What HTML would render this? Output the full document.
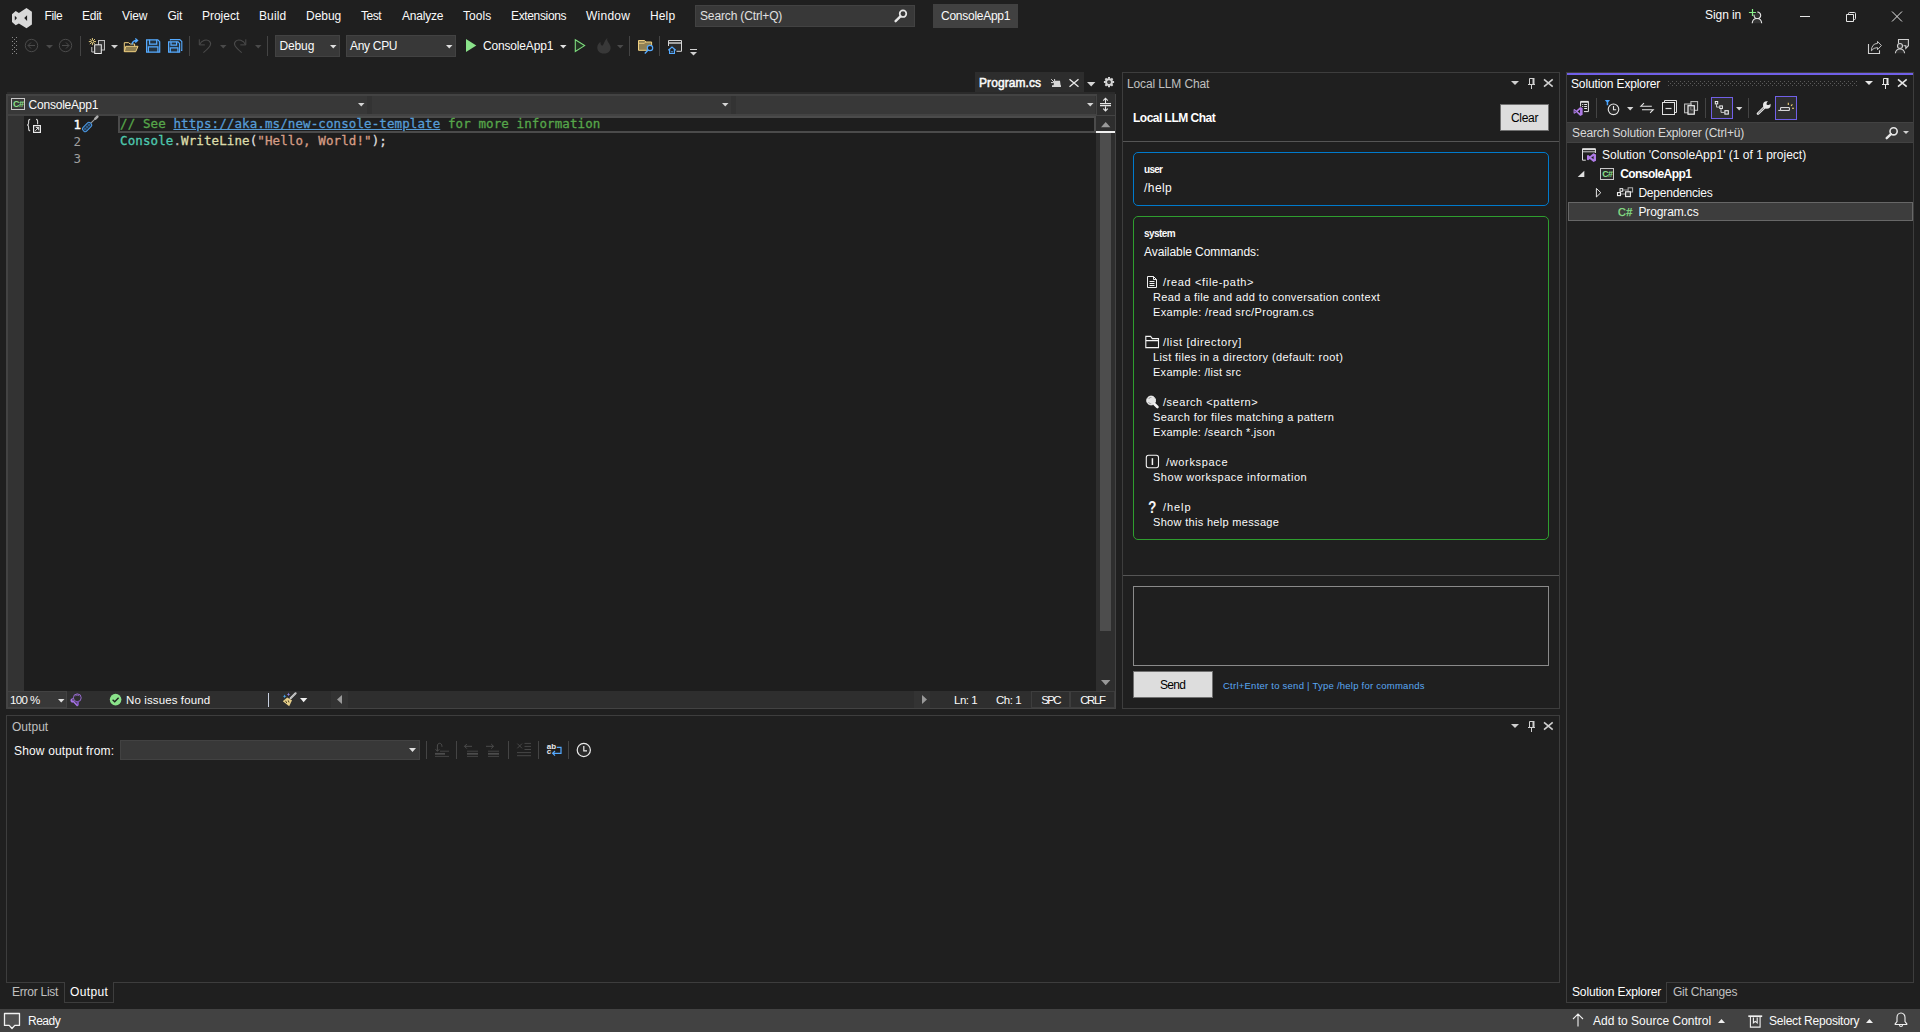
<!DOCTYPE html>
<html lang="en"><head><meta charset="utf-8"><title>ConsoleApp1 - Microsoft Visual Studio</title>
<style>
html,body{margin:0;padding:0;}
body{width:1920px;height:1032px;overflow:hidden;background:#1f1f1f;position:relative;font-family:"Liberation Sans", sans-serif;}
.t{position:absolute;white-space:pre;margin:0;padding:0;}
.m{font-family:"DejaVu Sans Mono", "Liberation Mono", monospace;}
.b{position:absolute;box-sizing:border-box;margin:0;padding:0;overflow:visible;}
</style></head><body>
<svg class="b" style="left:11px;top:7px;" width="23" height="22" viewBox="11 7 23 22"><path d="M26.5 7.9L31.9 11.8V24.4L26.5 28.2L18.9 23.4L15.7 25.3L12 22V14.3L15.7 11L18.9 12.9Z M27.1 15.3V20.9L24.2 18.1Z M14.8 15.7V20.5L17 18.1Z" fill="#d9d9d9" fill-rule="evenodd"/></svg><span class="t s" id="t0" style="left:44.5px;top:7.84px;font-size:12px;line-height:16px;color:#fafafa;letter-spacing:-0.361px;">File</span><span class="t s" id="t1" style="left:82px;top:7.84px;font-size:12px;line-height:16px;color:#fafafa;letter-spacing:-0.247px;">Edit</span><span class="t s" id="t2" style="left:122px;top:7.84px;font-size:12px;line-height:16px;color:#fafafa;letter-spacing:-0.149px;">View</span><span class="t s" id="t3" style="left:167.5px;top:7.84px;font-size:12px;line-height:16px;color:#fafafa;letter-spacing:-0.215px;">Git</span><span class="t s" id="t4" style="left:202px;top:7.84px;font-size:12px;line-height:16px;color:#fafafa;letter-spacing:-0.023px;">Project</span><span class="t s" id="t5" style="left:259px;top:7.84px;font-size:12px;line-height:16px;color:#fafafa;letter-spacing:0.102px;">Build</span><span class="t s" id="t6" style="left:306px;top:7.84px;font-size:12px;line-height:16px;color:#fafafa;letter-spacing:-0.035px;">Debug</span><span class="t s" id="t7" style="left:361px;top:7.84px;font-size:12px;line-height:16px;color:#fafafa;letter-spacing:-0.454px;">Test</span><span class="t s" id="t8" style="left:402px;top:7.84px;font-size:12px;line-height:16px;color:#fafafa;letter-spacing:-0.215px;">Analyze</span><span class="t s" id="t9" style="left:463px;top:7.84px;font-size:12px;line-height:16px;color:#fafafa;letter-spacing:0.037px;">Tools</span><span class="t s" id="t10" style="left:511px;top:7.84px;font-size:12px;line-height:16px;color:#fafafa;letter-spacing:-0.350px;">Extensions</span><span class="t s" id="t11" style="left:586px;top:7.84px;font-size:12px;line-height:16px;color:#fafafa;letter-spacing:0.252px;">Window</span><span class="t s" id="t12" style="left:650px;top:7.84px;font-size:12px;line-height:16px;color:#fafafa;letter-spacing:0.128px;">Help</span><div class="b" style="left:695px;top:5px;width:220px;height:22px;background:#383838;border:1px solid #424242;"></div><span class="t s" id="t13" style="left:700px;top:7.84px;font-size:12px;line-height:16px;color:#e0e0e0;letter-spacing:-0.144px;">Search (Ctrl+Q)</span><svg class="b" style="left:893px;top:8px;" width="16" height="16" viewBox="893 8 16 16"><circle cx="903" cy="13.7" r="3.3" fill="none" stroke="#e6e6e6" stroke-width="1.7"/><path d="M900.4 16.4L895.6 21.2" stroke="#e6e6e6" stroke-width="2.4" stroke-linecap="round"/></svg><div class="b" style="left:933px;top:4px;width:85px;height:24px;background:#414141;"></div><span class="t s" id="t14" style="left:941px;top:7.84px;font-size:12px;line-height:16px;color:#fafafa;letter-spacing:-0.260px;">ConsoleApp1</span><span class="t s" id="t15" style="left:1705px;top:6.84px;font-size:12px;line-height:16px;color:#fafafa;letter-spacing:-0.072px;">Sign in</span><svg class="b" style="left:1747px;top:7px;" width="18" height="18" viewBox="1747 7 18 18"><path d="M1748.9 12.5H1755.9M1752.5 9V16" stroke="#8aee8a" stroke-width="1.2"/><path d="M1754.1 14.6A3.35 3.35 0 1 0 1757.3 12.05" fill="#2e2e2e" stroke="#e6e6e6" stroke-width="1.1"/><path d="M1752.2 23.2C1752.5 20 1754.6 18.5 1757 18.5C1759.4 18.5 1761.4 20 1761.7 23.2" fill="#333" stroke="#e6e6e6" stroke-width="1.1"/></svg><div class="b" style="left:1800px;top:16px;width:10px;height:1px;background:#e6e6e6;"></div><svg class="b" style="left:1844px;top:10px;" width="14" height="14" viewBox="1844 10 14 14"><path d="M1846.5 14.5H1853.5V21.5H1846.5Z" fill="none" stroke="#e6e6e6" stroke-width="1"/><path d="M1848.5 14.5V13.5Q1848.5 12.5 1849.5 12.5H1854.5Q1855.5 12.5 1855.5 13.5V18.5Q1855.5 19.5 1854.5 19.5H1853.5" fill="none" stroke="#e6e6e6" stroke-width="1"/></svg><svg class="b" style="left:1890px;top:9px;" width="14" height="14" viewBox="1890 9 14 14"><path d="M1892 11.5L1902 21.5M1902 11.5L1892 21.5" stroke="#e6e6e6" stroke-width="1"/></svg><svg class="b" style="left:11px;top:36px;" width="8" height="20" viewBox="11 36 8 20"><rect x="12" y="37" width="1" height="1" fill="#8a8a8a"/><rect x="16" y="37" width="1" height="1" fill="#8a8a8a"/><rect x="14" y="39" width="1" height="1" fill="#8a8a8a"/><rect x="12" y="41" width="1" height="1" fill="#8a8a8a"/><rect x="16" y="41" width="1" height="1" fill="#8a8a8a"/><rect x="14" y="43" width="1" height="1" fill="#8a8a8a"/><rect x="12" y="45" width="1" height="1" fill="#8a8a8a"/><rect x="16" y="45" width="1" height="1" fill="#8a8a8a"/><rect x="14" y="47" width="1" height="1" fill="#8a8a8a"/><rect x="12" y="49" width="1" height="1" fill="#8a8a8a"/><rect x="16" y="49" width="1" height="1" fill="#8a8a8a"/><rect x="14" y="51" width="1" height="1" fill="#8a8a8a"/><rect x="12" y="53" width="1" height="1" fill="#8a8a8a"/><rect x="16" y="53" width="1" height="1" fill="#8a8a8a"/></svg><svg class="b" style="left:24px;top:38px;" width="16" height="16" viewBox="24 38 16 16"><circle cx="31.5" cy="45.5" r="6.2" fill="none" stroke="#4a4a4a" stroke-width="1"/><path d="M35 45.5H28.2M31 42.5L28 45.5L31 48.5" fill="none" stroke="#4a4a4a" stroke-width="1"/></svg><svg class="b" style="left:46px;top:45px;" width="7" height="3.5" viewBox="0 0 7 3.5"><path d="M0 0H7L3.5 3.5Z" fill="#4a4a4a"/></svg><svg class="b" style="left:58px;top:38px;" width="16" height="16" viewBox="58 38 16 16"><circle cx="65.5" cy="45.5" r="6.2" fill="none" stroke="#4a4a4a" stroke-width="1"/><path d="M62 45.5H68.8M66 42.5L69 45.5L66 48.5" fill="none" stroke="#4a4a4a" stroke-width="1"/></svg><div class="b" style="left:80px;top:36px;width:1px;height:20px;background:#444;"></div><svg class="b" style="left:87px;top:36px;" width="20" height="20" viewBox="87 36 20 20"><rect x="98.5" y="40.5" width="6" height="9.5" fill="#333" stroke="#bcbcbc" stroke-width="1"/><path d="M91.8 47V52H94.5" fill="none" stroke="#c8c8c8" stroke-width="1"/><rect x="94.7" y="44.8" width="6.6" height="8.7" fill="#3d3d3d" stroke="#f0f0f0" stroke-width="1"/><path d="M92.4 41.6L96.00 41.60" stroke="#f5dd8a" stroke-width="0.9"/><path d="M92.4 41.6L94.95 44.15" stroke="#f5dd8a" stroke-width="0.9"/><path d="M92.4 41.6L92.40 45.20" stroke="#f5dd8a" stroke-width="0.9"/><path d="M92.4 41.6L89.85 44.15" stroke="#f5dd8a" stroke-width="0.9"/><path d="M92.4 41.6L88.80 41.60" stroke="#f5dd8a" stroke-width="0.9"/><path d="M92.4 41.6L89.85 39.05" stroke="#f5dd8a" stroke-width="0.9"/><path d="M92.4 41.6L92.40 38.00" stroke="#f5dd8a" stroke-width="0.9"/><path d="M92.4 41.6L94.95 39.05" stroke="#f5dd8a" stroke-width="0.9"/><circle cx="92.4" cy="41.6" r="1" fill="#1f1f1f"/></svg><svg class="b" style="left:111px;top:45px;" width="7" height="3.5" viewBox="0 0 7 3.5"><path d="M0 0H7L3.5 3.5Z" fill="#d0d0d0"/></svg><svg class="b" style="left:122px;top:37px;" width="18" height="17" viewBox="122 37 18 17"><path d="M124.3 51.5V42.7H128.6L130.2 44H134.6V46.2" fill="none" stroke="#f0d080" stroke-width="1"/><path d="M124.3 51.7L125.8 46.3H138L135.7 51.7Z" fill="#8d7d50" stroke="#f0d080" stroke-width="1"/><path d="M132 44.5C132.3 41.5 134 40.5 137 40.5M135.3 38.4L137.6 40.5L135.3 42.6" fill="none" stroke="#55aaff" stroke-width="1.3"/></svg><svg class="b" style="left:145px;top:38px;" width="17" height="16" viewBox="145 38 17 16"><path d="M146.6 39.8H157.8L159.7 41.7V52.2H146.6Z" fill="#263440" stroke="#55aaff" stroke-width="1.2"/><path d="M149.6 39.8V44.2H156.7V39.8M148.4 52.2V46.8H157.9V52.2" fill="none" stroke="#55aaff" stroke-width="1.2"/></svg><svg class="b" style="left:167px;top:38px;" width="17" height="16" viewBox="167 38 17 16"><path d="M170.4 40.5V39.6H179.8L181.8 41.6V50.4H181" fill="none" stroke="#55aaff" stroke-width="1.1"/><path d="M168.6 41.8H178L179.6 43.4V52.2H168.6Z" fill="#263440" stroke="#55aaff" stroke-width="1.2"/><path d="M171 41.8V45.2H176.6V41.8M170.3 52.2V47.8H177.9V52.2" fill="none" stroke="#55aaff" stroke-width="1.2"/></svg><div class="b" style="left:189px;top:36px;width:1px;height:20px;background:#444;"></div><svg class="b" style="left:197px;top:38px;" width="16" height="16" viewBox="197 38 16 16"><path d="M199.3 39.3V44.9H204.8" fill="none" stroke="#4a4a4a" stroke-width="1"/><path d="M199.6 44.6C201.5 40 207 38.8 209.6 41.4C212 44 210.5 46.5 203.4 52.6" fill="none" stroke="#4a4a4a" stroke-width="1.1"/></svg><svg class="b" style="left:220px;top:45px;" width="6.5" height="3.5" viewBox="0 0 6.5 3.5"><path d="M0 0H6.5L3.25 3.5Z" fill="#4a4a4a"/></svg><svg class="b" style="left:233px;top:38px;" width="16" height="16" viewBox="233 38 16 16"><path d="M245.8 39.3V44.9H240.3" fill="none" stroke="#4a4a4a" stroke-width="1"/><path d="M245.5 44.6C243.6 40 238.1 38.8 235.5 41.4C233.1 44 234.6 46.5 241.7 52.6" fill="none" stroke="#4a4a4a" stroke-width="1.1"/></svg><svg class="b" style="left:255px;top:45px;" width="6.5" height="3.5" viewBox="0 0 6.5 3.5"><path d="M0 0H6.5L3.25 3.5Z" fill="#4a4a4a"/></svg><div class="b" style="left:267px;top:36px;width:1px;height:20px;background:#444;"></div><div class="b" style="left:275px;top:35px;width:65px;height:22px;background:#383838;border:1px solid #424242;"></div><span class="t s" id="t16" style="left:279.5px;top:37.84px;font-size:12px;line-height:16px;color:#fafafa;letter-spacing:-0.135px;">Debug</span><svg class="b" style="left:330px;top:45px;" width="6.5" height="3.5" viewBox="0 0 6.5 3.5"><path d="M0 0H6.5L3.25 3.5Z" fill="#e0e0e0"/></svg><div class="b" style="left:346px;top:35px;width:110px;height:22px;background:#383838;border:1px solid #424242;"></div><span class="t s" id="t17" style="left:350px;top:37.84px;font-size:12px;line-height:16px;color:#fafafa;letter-spacing:-0.308px;">Any CPU</span><svg class="b" style="left:446px;top:45px;" width="6.5" height="3.5" viewBox="0 0 6.5 3.5"><path d="M0 0H6.5L3.25 3.5Z" fill="#e0e0e0"/></svg><svg class="b" style="left:465px;top:38px;" width="13" height="16" viewBox="465 38 13 16"><path d="M466 39L476.3 45.5L466 52Z" fill="#8ae28a"/></svg><span class="t s" id="t18" style="left:483px;top:37.84px;font-size:12px;line-height:16px;color:#fafafa;letter-spacing:-0.169px;">ConsoleApp1</span><svg class="b" style="left:560px;top:45px;" width="6.5" height="3.5" viewBox="0 0 6.5 3.5"><path d="M0 0H6.5L3.25 3.5Z" fill="#e0e0e0"/></svg><svg class="b" style="left:573px;top:38px;" width="14" height="16" viewBox="573 38 14 16"><path d="M575.3 39.8L584.6 45.6L575.3 51.4Z" fill="#233323" stroke="#7ddc7d" stroke-width="1.1"/></svg><svg class="b" style="left:596px;top:37px;" width="16" height="18" viewBox="596 37 16 18"><path d="M607.5 38C606 41 609.5 43 610.5 46.5C611.3 50.5 608.5 53.6 604 53.6C599.5 53.6 597 50.5 597.3 47C597.5 44.5 599 43 600.5 42C600.3 44 601 45.5 602.3 45.8C604.5 43.5 604.5 40 607.5 38Z" fill="#383838"/></svg><svg class="b" style="left:617px;top:45px;" width="6.5" height="3.5" viewBox="0 0 6.5 3.5"><path d="M0 0H6.5L3.25 3.5Z" fill="#4a4a4a"/></svg><div class="b" style="left:629px;top:36px;width:1px;height:20px;background:#444;"></div><svg class="b" style="left:636px;top:38px;" width="20" height="18" viewBox="636 38 20 18"><path d="M638.5 50.3V40.5H644.6L645.8 42H651.6V50.3Z" fill="#8f8055" stroke="#f0d080" stroke-width="1"/><path d="M638.5 43.3H644.4L645.6 42" fill="none" stroke="#f0d080" stroke-width="0.9"/><circle cx="650" cy="48" r="2.7" fill="#1f1f1f" stroke="#55aaff" stroke-width="1.2"/><path d="M648.2 50L644.8 53.5" stroke="#55aaff" stroke-width="1.3"/></svg><div class="b" style="left:659px;top:36px;width:1px;height:20px;background:#444;"></div><svg class="b" style="left:666px;top:38px;" width="19" height="18" viewBox="666 38 19 18"><path d="M668.5 46V40.5H681.5V51.3H676.5" fill="#2a2a2a" stroke="#d6d6d6" stroke-width="1"/><path d="M668.5 43H681.5" stroke="#d6d6d6" stroke-width="1.4"/><path d="M668.3 50.3L672 47L675.7 50.3M669.6 49.5V53.5H674.4V49.5" fill="#1f1f1f" stroke="#55aaff" stroke-width="1.2"/><rect x="671.4" y="51" width="1.2" height="1.5" fill="#55aaff"/></svg><div class="b" style="left:690px;top:49px;width:7px;height:1.3px;background:#d0d0d0;"></div><svg class="b" style="left:690px;top:51.8px;" width="7" height="3.4" viewBox="0 0 7 3.4"><path d="M0 0H7L3.5 3.4Z" fill="#d0d0d0"/></svg><svg class="b" style="left:1866px;top:38px;" width="18" height="18" viewBox="1866 38 18 18"><path d="M1868.5 44V53.5H1879.5V50.3" fill="none" stroke="#d0d0d0" stroke-width="1.1"/><path d="M1877.5 41.4L1881.4 45.5L1877.5 49.7V47.6Q1873.6 47.4 1871.4 50.8Q1871.6 43.7 1877.5 43.4Z" fill="none" stroke="#d0d0d0" stroke-width="0.9" stroke-linejoin="round"/></svg><svg class="b" style="left:1893px;top:37px;" width="18" height="19" viewBox="1893 37 18 19"><path d="M1898.5 43.5V39.5H1908.4V45.7L1905.8 48.3V45.7H1903.5" fill="#2c2c2c" stroke="#d0d0d0" stroke-width="1.1"/><circle cx="1900" cy="46" r="2.5" fill="#383838" stroke="#d0d0d0" stroke-width="1.1"/><path d="M1895.4 53.2C1895.7 50.3 1897.8 49 1900 49C1902.2 49 1904.3 50.3 1904.6 53.2" fill="#2e2e2e" stroke="#d0d0d0" stroke-width="1.1"/></svg><div class="b" style="left:975px;top:72px;width:109px;height:20px;background:#2d2d2d;"></div><span class="t s" id="t19" style="left:979px;top:74.84px;font-size:12px;line-height:16px;color:#fafafa;letter-spacing:0.084px;-webkit-text-stroke:0.5px #fafafa;">Program.cs</span><svg class="b" style="left:1049px;top:77px;" width="14" height="12" viewBox="1049 77 14 12"><path d="M1054.2 80.7H1060L1060.6 85.3H1061V87H1052V85.3H1053.6Z" fill="#d6d6d6"/><path d="M1051.2 79.2L1054.4 82.4M1054.6 79V81.2M1051 82.6H1054" stroke="#d6d6d6" stroke-width="1"/></svg><svg class="b" style="left:1067px;top:77px;" width="14" height="12" viewBox="1067 77 14 12"><path d="M1069.5 79.3L1078.5 86.8M1078.5 79.3L1069.5 86.8" stroke="#e6e6e6" stroke-width="1.4"/></svg><svg class="b" style="left:1086.8px;top:81.8px;" width="8.4" height="4.6" viewBox="0 0 8.4 4.6"><path d="M0 0H8.4L4.2 4.6Z" fill="#d6d6d6"/></svg><svg class="b" style="left:1102px;top:75px;" width="14" height="14" viewBox="1102 75 14 14"><path d="M1112.30 82.10L1114.10 82.10M1111.33 84.43L1112.61 85.71M1109.00 85.40L1109.00 87.20M1106.67 84.43L1105.39 85.71M1105.70 82.10L1103.90 82.10M1106.67 79.77L1105.39 78.49M1109.00 78.80L1109.00 77.00M1111.33 79.77L1112.61 78.49" stroke="#d6d6d6" stroke-width="2"/><circle cx="1109" cy="82.1" r="3.9" fill="#d6d6d6"/><circle cx="1109" cy="82.1" r="1.9" fill="#1f1f1f"/><circle cx="1109" cy="82.1" r="0.7" fill="#8a8a8a"/></svg><div class="b" style="left:7px;top:92px;width:1108px;height:2px;background:#2a2a2a;"></div><div class="b" style="left:6px;top:94px;width:1110px;height:615px;background:#434343;"></div><div class="b" style="left:8px;top:96px;width:1088px;height:18px;background:#333333;"></div><div class="b" style="left:8px;top:96px;width:359px;height:18px;background:#383838;"></div><div class="b" style="left:372px;top:96px;width:359px;height:18px;background:#383838;"></div><div class="b" style="left:736px;top:96px;width:359px;height:18px;background:#383838;"></div><div class="b" style="left:1097px;top:94px;width:18px;height:21px;background:#2e2e2e;"></div><svg class="b" style="left:358px;top:103.3px;" width="6.5" height="3.5" viewBox="0 0 6.5 3.5"><path d="M0 0H6.5L3.25 3.5Z" fill="#d6d6d6"/></svg><svg class="b" style="left:722px;top:103.3px;" width="6.5" height="3.5" viewBox="0 0 6.5 3.5"><path d="M0 0H6.5L3.25 3.5Z" fill="#d6d6d6"/></svg><svg class="b" style="left:1086.5px;top:103.3px;" width="6.5" height="3.5" viewBox="0 0 6.5 3.5"><path d="M0 0H6.5L3.25 3.5Z" fill="#d6d6d6"/></svg><div class="b" style="left:11px;top:98px;width:14px;height:12px;background:#3a3a3a;border:1px solid #c8c8c8;"></div><span class="t s" id="t20" style="left:13px;top:97.68px;font-size:9px;line-height:13px;color:#8ae28a;font-weight:bold;letter-spacing:-0.508px;">C#</span><span class="t s" id="t21" style="left:28.6px;top:96.84px;font-size:12px;line-height:16px;color:#fafafa;letter-spacing:-0.224px;">ConsoleApp1</span><svg class="b" style="left:1098px;top:96px;" width="16" height="18" viewBox="1098 96 16 18"><path d="M1100 103.6H1111M1100 105.6H1111" stroke="#e6e6e6" stroke-width="1.1"/><path d="M1105.5 103V98.5M1103.2 100.6L1105.5 98.2L1107.8 100.6M1105.5 106.2V110.7M1103.2 108.6L1105.5 111L1107.8 108.6" fill="none" stroke="#e6e6e6" stroke-width="1.1"/></svg><div class="b" style="left:8px;top:116px;width:1088px;height:575px;background:#1e1e1e;"></div><div class="b" style="left:8px;top:116px;width:16px;height:575px;background:#333333;"></div><div class="b" style="left:118px;top:116px;width:978px;height:17px;border:2px solid #4b4b4b;"></div><div class="b" style="left:1096px;top:116px;width:19px;height:575px;background:#2e2e2e;"></div><svg class="b" style="left:1100.8px;top:121.6px;" width="9.4" height="5.2" viewBox="0 0 9.4 5.2"><path d="M0 5.2H9.4L4.7 0Z" fill="#999"/></svg><div class="b" style="left:1100px;top:133px;width:11px;height:498px;background:#4d4d4d;"></div><div class="b" style="left:1096px;top:131px;width:19px;height:2px;background:#f0f0f0;"></div><svg class="b" style="left:1100.8px;top:680px;" width="9.4" height="5.2" viewBox="0 0 9.4 5.2"><path d="M0 0H9.4L4.7 5.2Z" fill="#999"/></svg><svg class="b" style="left:26px;top:116px;" width="18" height="20" viewBox="26 116 18 20"><path d="M30.2 119.2C28.6 119.2 28.6 120.2 28.6 121.5V123C28.6 124.4 28 124.9 27.2 125C28 125.1 28.6 125.6 28.6 127V128.5C28.6 129.8 28.6 130.8 30.2 130.8" fill="none" stroke="#d6d6d6" stroke-width="1.1"/><path d="M36 119.2C37.6 119.2 37.6 120.2 37.6 121.5V124.2" fill="none" stroke="#d6d6d6" stroke-width="1.1"/><rect x="33.6" y="125.6" width="6.8" height="6.8" fill="#1e1e1e" stroke="#eaeaea" stroke-width="1.2"/><path d="M35.3 130.8L38.6 127.5M35.8 127.4H38.7V130.3" fill="none" stroke="#eaeaea" stroke-width="1"/></svg><svg class="b" style="left:81px;top:115px;" width="19" height="19" viewBox="81 115 19 19"><path d="M90.6 123.4L95.6 118.4" stroke="#9c9c9c" stroke-width="1.2"/><path d="M95.4 118.6L97.4 116.6" stroke="#ababab" stroke-width="2.5" stroke-linecap="round"/><g transform="rotate(-46 87.1 127)"><rect x="81.9" y="124.4" width="10.4" height="5.2" rx="2.2" fill="#21384f" stroke="#4d9ae6" stroke-width="1"/><path d="M84.4 124.6V129.4M87.1 124.6V129.4M89.8 124.6V129.4M82.2 127H92" stroke="#3b78b4" stroke-width="0.6"/></g></svg><span class="t m" id="t22" style="left:73.6px;top:117.11px;font-size:12.5px;line-height:16.5px;color:#ffffff;letter-spacing:-1.331px;-webkit-text-stroke:0.4px #ffffff;">1</span><span class="t m" id="t23" style="left:73.5px;top:134.11px;font-size:12.5px;line-height:16.5px;color:#a0a0a0;letter-spacing:-1.331px;">2</span><span class="t m" id="t24" style="left:73.5px;top:151.11px;font-size:12.5px;line-height:16.5px;color:#a0a0a0;letter-spacing:-1.331px;">3</span><span class="t m" id="t25" style="left:120.0px;top:116.41px;font-size:12.5px;line-height:16.5px;color:#57a64a;letter-spacing:0.100px;-webkit-text-stroke:0.3px #57a64a;">// See </span><span class="t m" id="t26" style="left:173.375px;top:116.41px;font-size:12.5px;line-height:16.5px;color:#569cd6;letter-spacing:0.100px;-webkit-text-stroke:0.3px #569cd6;text-decoration:underline;">https://aka.ms/new-console-template</span><span class="t m" id="t27" style="left:440.25px;top:116.41px;font-size:12.5px;line-height:16.5px;color:#57a64a;letter-spacing:0.100px;-webkit-text-stroke:0.3px #57a64a;"> for more information</span><span class="t m" id="t28" style="left:120.0px;top:133.41px;font-size:12.5px;line-height:16.5px;color:#4ec9b0;letter-spacing:0.100px;-webkit-text-stroke:0.3px #4ec9b0;">Console</span><span class="t m" id="t29" style="left:173.375px;top:133.41px;font-size:12.5px;line-height:16.5px;color:#b4b4b4;letter-spacing:0.100px;-webkit-text-stroke:0.3px #b4b4b4;">.</span><span class="t m" id="t30" style="left:181.0px;top:133.41px;font-size:12.5px;line-height:16.5px;color:#dcdcaa;letter-spacing:0.100px;-webkit-text-stroke:0.3px #dcdcaa;">WriteLine</span><span class="t m" id="t31" style="left:249.625px;top:133.41px;font-size:12.5px;line-height:16.5px;color:#dcdcdc;letter-spacing:0.100px;-webkit-text-stroke:0.3px #dcdcdc;">(</span><span class="t m" id="t32" style="left:257.25px;top:133.41px;font-size:12.5px;line-height:16.5px;color:#d69d85;letter-spacing:0.100px;-webkit-text-stroke:0.3px #d69d85;">"Hello, World!"</span><span class="t m" id="t33" style="left:371.625px;top:133.41px;font-size:12.5px;line-height:16.5px;color:#dcdcdc;letter-spacing:0.100px;-webkit-text-stroke:0.3px #dcdcdc;">);</span><div class="b" style="left:8px;top:691px;width:1107px;height:17px;background:#2e2e2e;"></div><div class="b" style="left:8px;top:691px;width:59px;height:17px;background:#383838;border:1px solid #424242;border-left:none;"></div><span class="t s" id="t34" style="left:10px;top:692.97px;font-size:11.5px;line-height:15.5px;color:#fafafa;letter-spacing:-0.622px;">100 %</span><svg class="b" style="left:58px;top:699px;" width="6.5" height="3.4" viewBox="0 0 6.5 3.4"><path d="M0 0H6.5L3.25 3.4Z" fill="#e0e0e0"/></svg><svg class="b" style="left:68px;top:692px;" width="16" height="16" viewBox="68 692 16 16"><circle cx="77.3" cy="697.8" r="3.9" fill="none" stroke="#a674e6" stroke-width="0.85"/><path d="M75.4 695.8C76.5 694.9 78.1 694.9 79.2 695.8" fill="none" stroke="#a674e6" stroke-width="0.8"/><path d="M76.2 701.3H78.9V705.6H77.2Z" fill="#7d55b8"/><path d="M73 701L77.2 705.5" stroke="#a674e6" stroke-width="1.6" stroke-linecap="round"/><path d="M73.6 698.4C72.2 697.9 70.8 698.7 70.5 700C70.2 701.4 71.2 702.6 72.6 702.7L73.6 701.2L72.2 700.6L72.4 699.4Z" fill="#a674e6"/></svg><svg class="b" style="left:108px;top:692px;" width="16" height="16" viewBox="108 692 16 16"><circle cx="115.6" cy="699.6" r="5.8" fill="#8ae28a"/><path d="M112.6 699.8L114.7 701.8L118.6 697.8" fill="none" stroke="#1e1e1e" stroke-width="1.3"/></svg><span class="t s" id="t35" style="left:126px;top:692.97px;font-size:11.5px;line-height:15.5px;color:#fafafa;letter-spacing:0.115px;">No issues found</span><div class="b" style="left:268px;top:693px;width:1.3px;height:13.5px;background:#c8d0e0;"></div><svg class="b" style="left:281px;top:691px;" width="17" height="17" viewBox="281 691 17 17"><path d="M295.6 693.3L290.6 698.3" stroke="#d0d0d0" stroke-width="2" stroke-linecap="round"/><path d="M295.4 693.5L291 697.9" stroke="#7a7a7a" stroke-width="0.6" stroke-dasharray="0.7 0.7"/><path d="M287.2 697.6L292 700.2L289.2 706.2L282.8 701.2Z" fill="#e8d08a"/><path d="M285.5 700.8L286.8 703M288.2 700.4L289 702.4" stroke="#4a4020" stroke-width="1"/><path d="M284.6 694.4L285.132 695.7679999999999L286.5 696.3L285.132 696.832L284.6 698.1999999999999L284.06800000000004 696.832L282.70000000000005 696.3L284.06800000000004 695.7679999999999Z" fill="#4aa8f0"/><path d="M288.5 692.6L289.004 693.896L290.3 694.4L289.004 694.904L288.5 696.1999999999999L287.996 694.904L286.7 694.4L287.996 693.896Z" fill="#8a80e0"/></svg><svg class="b" style="left:299.8px;top:698px;" width="7.3" height="4.2" viewBox="0 0 7.3 4.2"><path d="M0 0H7.3L3.65 4.2Z" fill="#f0f0f0"/></svg><div class="b" style="left:331px;top:691px;width:17px;height:17px;background:#333;"></div><div class="b" style="left:914px;top:691px;width:16px;height:17px;background:#333;"></div><svg class="b" style="left:337px;top:695px;" width="5" height="9" viewBox="0 0 5 9"><path d="M5 0V9L0 4.5Z" fill="#999"/></svg><svg class="b" style="left:921.5px;top:695px;" width="5" height="9" viewBox="0 0 5 9"><path d="M0 0V9L5 4.5Z" fill="#999"/></svg><span class="t s" id="t36" style="left:954px;top:692.97px;font-size:11.5px;line-height:15.5px;color:#fafafa;letter-spacing:-0.476px;">Ln: 1</span><span class="t s" id="t37" style="left:996px;top:692.97px;font-size:11.5px;line-height:15.5px;color:#fafafa;letter-spacing:-0.460px;">Ch: 1</span><div class="b" style="left:1031px;top:691px;width:39px;height:17px;border:1px solid #3d3d3d;"></div><div class="b" style="left:1070px;top:691px;width:45px;height:17px;border:1px solid #3d3d3d;"></div><span class="t s" id="t38" style="left:1041.2px;top:692.97px;font-size:11.5px;line-height:15.5px;color:#fafafa;letter-spacing:-1.619px;">SPC</span><span class="t s" id="t39" style="left:1080.2px;top:692.97px;font-size:11.5px;line-height:15.5px;color:#fafafa;letter-spacing:-1.383px;">CRLF</span><div class="b" style="left:1122px;top:72px;width:438px;height:637px;border:1px solid #3d3d3d;"></div><span class="t s" id="t40" style="left:1127px;top:75.84px;font-size:12px;line-height:16px;color:#c0c0c0;letter-spacing:-0.132px;">Local LLM Chat</span><svg class="b" style="left:1511px;top:81px;" width="8" height="4" viewBox="0 0 8 4"><path d="M0 0H8L4.0 4Z" fill="#d0d0d0"/></svg><svg class="b" style="left:1528px;top:77px;" width="8" height="13" viewBox="0 0 8 13"><path d="M1.5 7V1.5H5.5M0 7.5H7M3.5 8V12" fill="none" stroke="#d0d0d0" stroke-width="1"/><path d="M5.5 1V7" stroke="#d0d0d0" stroke-width="2"/></svg><svg class="b" style="left:1543px;top:78px;" width="11" height="10" viewBox="0 0 11 10"><path d="M1 1.3L9.7 8.6M9.7 1.3L1 8.6" stroke="#d0d0d0" stroke-width="1.6"/></svg><span class="t s" id="t41" style="left:1133px;top:109.84px;font-size:12px;line-height:16px;color:#ffffff;font-weight:bold;letter-spacing:-0.510px;">Local LLM Chat</span><div class="b" style="left:1500px;top:104px;width:49px;height:27px;background:#dddddd;border:1px solid #707070;"></div><span class="t s" id="t42" style="left:1511px;top:109.84px;font-size:12px;line-height:16px;color:#000000;letter-spacing:-0.298px;">Clear</span><div class="b" style="left:1123px;top:141px;width:436px;height:1px;background:#555555;"></div><div class="b" style="left:1133px;top:152px;width:416px;height:54px;border:1px solid #007acc;border-radius:5px;"></div><span class="t s" id="t43" style="left:1144px;top:162.53px;font-size:10px;line-height:14px;color:#fafafa;font-weight:bold;letter-spacing:-0.731px;">user</span><span class="t s" id="t44" style="left:1144px;top:179.84px;font-size:12px;line-height:16px;color:#fafafa;letter-spacing:0.434px;">/help</span><div class="b" style="left:1133px;top:216px;width:416px;height:324px;border:1px solid #2f9e2f;border-radius:5px;"></div><span class="t s" id="t45" style="left:1144px;top:226.53px;font-size:10px;line-height:14px;color:#fafafa;font-weight:bold;letter-spacing:-0.545px;">system</span><span class="t s" id="t46" style="left:1144px;top:243.84px;font-size:12px;line-height:16px;color:#fafafa;letter-spacing:-0.069px;">Available Commands:</span><svg class="b" style="left:1146px;top:276px;" width="12" height="12" viewBox="0 0 12 12"><path d="M1.5 0.5H7.5L10.5 3.5V11.5H1.5Z" fill="none" stroke="#f0f0f0" stroke-width="1"/><path d="M7.5 0.5V3.5H10.5M3.5 5.5H8.5M3.5 7.5H8.5M3.5 9.5H8.5" fill="none" stroke="#f0f0f0" stroke-width="1"/></svg><span class="t s" id="t47" style="left:1163px;top:274.89px;font-size:11px;line-height:15px;color:#fafafa;letter-spacing:0.651px;">/read &lt;file-path&gt;</span><span class="t s" id="t48" style="left:1153px;top:289.89px;font-size:11px;line-height:15px;color:#fafafa;letter-spacing:0.363px;">Read a file and add to conversation context</span><span class="t s" id="t49" style="left:1153px;top:304.89px;font-size:11px;line-height:15px;color:#fafafa;letter-spacing:0.352px;">Example: /read src/Program.cs</span><svg class="b" style="left:1145px;top:336px;" width="14" height="12" viewBox="0 0 14 12"><path d="M0.8 11.6V0.4H5.6L7.3 2.6H13.5V11.6Z M0.8 4.6H13.5" fill="none" stroke="#f4f4f4" stroke-width="1.1"/></svg><span class="t s" id="t50" style="left:1163px;top:334.89px;font-size:11px;line-height:15px;color:#fafafa;letter-spacing:0.649px;">/list [directory]</span><span class="t s" id="t51" style="left:1153px;top:349.89px;font-size:11px;line-height:15px;color:#fafafa;letter-spacing:0.389px;">List files in a directory (default: root)</span><span class="t s" id="t52" style="left:1153px;top:364.89px;font-size:11px;line-height:15px;color:#fafafa;letter-spacing:0.281px;">Example: /list src</span><svg class="b" style="left:1145px;top:395px;" width="15" height="14" viewBox="0 0 15 14"><circle cx="6.1" cy="5.5" r="4.4" fill="#e4e4e4" stroke="#f4f4f4" stroke-width="1"/><path d="M3.6 4C4.2 2.9 5.2 2.4 6.4 2.4M3.4 7C4 8.2 5 8.7 6.2 8.7" fill="none" stroke="#8a8a8a" stroke-width="0.8"/><path d="M9.6 9.2L12.4 12" stroke="#f4f4f4" stroke-width="2.7" stroke-linecap="round"/></svg><span class="t s" id="t53" style="left:1163px;top:394.89px;font-size:11px;line-height:15px;color:#fafafa;letter-spacing:0.527px;">/search &lt;pattern&gt;</span><span class="t s" id="t54" style="left:1153px;top:409.89px;font-size:11px;line-height:15px;color:#fafafa;letter-spacing:0.391px;">Search for files matching a pattern</span><span class="t s" id="t55" style="left:1153px;top:424.89px;font-size:11px;line-height:15px;color:#fafafa;letter-spacing:0.289px;">Example: /search *.json</span><svg class="b" style="left:1145px;top:454px;" width="15" height="15" viewBox="0 0 15 15"><rect x="1.3" y="1.3" width="12.2" height="12.4" rx="2.2" fill="none" stroke="#f4f4f4" stroke-width="1.1"/><path d="M7.4 4.2V11" stroke="#f4f4f4" stroke-width="1.5"/></svg><span class="t s" id="t56" style="left:1166px;top:454.89px;font-size:11px;line-height:15px;color:#fafafa;letter-spacing:0.656px;">/workspace</span><span class="t s" id="t57" style="left:1153px;top:469.89px;font-size:11px;line-height:15px;color:#fafafa;letter-spacing:0.522px;">Show workspace information</span><span class="t s" id="t58" style="left:1147.8px;top:499.06px;font-size:16px;line-height:18px;color:#f4f4f4;font-weight:bold;transform:scaleX(0.86);transform-origin:0 0;">?</span><span class="t s" id="t59" style="left:1163px;top:499.89px;font-size:11px;line-height:15px;color:#fafafa;letter-spacing:0.928px;">/help</span><span class="t s" id="t60" style="left:1153px;top:514.89px;font-size:11px;line-height:15px;color:#fafafa;letter-spacing:0.317px;">Show this help message</span><div class="b" style="left:1123px;top:575px;width:436px;height:1px;background:#555555;"></div><div class="b" style="left:1133px;top:586px;width:416px;height:80px;border:1px solid #8a8a8a;"></div><div class="b" style="left:1133px;top:671px;width:80px;height:27px;background:#dddddd;border:1px solid #707070;"></div><span class="t s" id="t61" style="left:1160px;top:676.84px;font-size:12px;line-height:16px;color:#000000;letter-spacing:-0.708px;">Send</span><span class="t s" id="t62" style="left:1223px;top:678.96px;font-size:9.5px;line-height:13.5px;color:#5aa8f2;letter-spacing:0.241px;">Ctrl+Enter to send | Type /help for commands</span><div class="b" style="left:1566px;top:72px;width:348px;height:911px;border:1px solid #3d3d3d;"></div><div class="b" style="left:1567px;top:73px;width:346px;height:2px;background:#7160e8;"></div><span class="t s" id="t63" style="left:1571px;top:75.84px;font-size:12px;line-height:16px;color:#ffffff;letter-spacing:-0.129px;">Solution Explorer</span><svg class="b" style="left:1668px;top:81px;" width="190" height="5" viewBox="0 0 190 5"><rect x="0" y="0" width="1" height="1" fill="#5a5a5a"/><rect x="4" y="0" width="1" height="1" fill="#5a5a5a"/><rect x="8" y="0" width="1" height="1" fill="#5a5a5a"/><rect x="12" y="0" width="1" height="1" fill="#5a5a5a"/><rect x="16" y="0" width="1" height="1" fill="#5a5a5a"/><rect x="20" y="0" width="1" height="1" fill="#5a5a5a"/><rect x="24" y="0" width="1" height="1" fill="#5a5a5a"/><rect x="28" y="0" width="1" height="1" fill="#5a5a5a"/><rect x="32" y="0" width="1" height="1" fill="#5a5a5a"/><rect x="36" y="0" width="1" height="1" fill="#5a5a5a"/><rect x="40" y="0" width="1" height="1" fill="#5a5a5a"/><rect x="44" y="0" width="1" height="1" fill="#5a5a5a"/><rect x="48" y="0" width="1" height="1" fill="#5a5a5a"/><rect x="52" y="0" width="1" height="1" fill="#5a5a5a"/><rect x="56" y="0" width="1" height="1" fill="#5a5a5a"/><rect x="60" y="0" width="1" height="1" fill="#5a5a5a"/><rect x="64" y="0" width="1" height="1" fill="#5a5a5a"/><rect x="68" y="0" width="1" height="1" fill="#5a5a5a"/><rect x="72" y="0" width="1" height="1" fill="#5a5a5a"/><rect x="76" y="0" width="1" height="1" fill="#5a5a5a"/><rect x="80" y="0" width="1" height="1" fill="#5a5a5a"/><rect x="84" y="0" width="1" height="1" fill="#5a5a5a"/><rect x="88" y="0" width="1" height="1" fill="#5a5a5a"/><rect x="92" y="0" width="1" height="1" fill="#5a5a5a"/><rect x="96" y="0" width="1" height="1" fill="#5a5a5a"/><rect x="100" y="0" width="1" height="1" fill="#5a5a5a"/><rect x="104" y="0" width="1" height="1" fill="#5a5a5a"/><rect x="108" y="0" width="1" height="1" fill="#5a5a5a"/><rect x="112" y="0" width="1" height="1" fill="#5a5a5a"/><rect x="116" y="0" width="1" height="1" fill="#5a5a5a"/><rect x="120" y="0" width="1" height="1" fill="#5a5a5a"/><rect x="124" y="0" width="1" height="1" fill="#5a5a5a"/><rect x="128" y="0" width="1" height="1" fill="#5a5a5a"/><rect x="132" y="0" width="1" height="1" fill="#5a5a5a"/><rect x="136" y="0" width="1" height="1" fill="#5a5a5a"/><rect x="140" y="0" width="1" height="1" fill="#5a5a5a"/><rect x="144" y="0" width="1" height="1" fill="#5a5a5a"/><rect x="148" y="0" width="1" height="1" fill="#5a5a5a"/><rect x="152" y="0" width="1" height="1" fill="#5a5a5a"/><rect x="156" y="0" width="1" height="1" fill="#5a5a5a"/><rect x="160" y="0" width="1" height="1" fill="#5a5a5a"/><rect x="164" y="0" width="1" height="1" fill="#5a5a5a"/><rect x="168" y="0" width="1" height="1" fill="#5a5a5a"/><rect x="172" y="0" width="1" height="1" fill="#5a5a5a"/><rect x="176" y="0" width="1" height="1" fill="#5a5a5a"/><rect x="180" y="0" width="1" height="1" fill="#5a5a5a"/><rect x="184" y="0" width="1" height="1" fill="#5a5a5a"/><rect x="188" y="0" width="1" height="1" fill="#5a5a5a"/><rect x="2" y="2" width="1" height="1" fill="#5a5a5a"/><rect x="6" y="2" width="1" height="1" fill="#5a5a5a"/><rect x="10" y="2" width="1" height="1" fill="#5a5a5a"/><rect x="14" y="2" width="1" height="1" fill="#5a5a5a"/><rect x="18" y="2" width="1" height="1" fill="#5a5a5a"/><rect x="22" y="2" width="1" height="1" fill="#5a5a5a"/><rect x="26" y="2" width="1" height="1" fill="#5a5a5a"/><rect x="30" y="2" width="1" height="1" fill="#5a5a5a"/><rect x="34" y="2" width="1" height="1" fill="#5a5a5a"/><rect x="38" y="2" width="1" height="1" fill="#5a5a5a"/><rect x="42" y="2" width="1" height="1" fill="#5a5a5a"/><rect x="46" y="2" width="1" height="1" fill="#5a5a5a"/><rect x="50" y="2" width="1" height="1" fill="#5a5a5a"/><rect x="54" y="2" width="1" height="1" fill="#5a5a5a"/><rect x="58" y="2" width="1" height="1" fill="#5a5a5a"/><rect x="62" y="2" width="1" height="1" fill="#5a5a5a"/><rect x="66" y="2" width="1" height="1" fill="#5a5a5a"/><rect x="70" y="2" width="1" height="1" fill="#5a5a5a"/><rect x="74" y="2" width="1" height="1" fill="#5a5a5a"/><rect x="78" y="2" width="1" height="1" fill="#5a5a5a"/><rect x="82" y="2" width="1" height="1" fill="#5a5a5a"/><rect x="86" y="2" width="1" height="1" fill="#5a5a5a"/><rect x="90" y="2" width="1" height="1" fill="#5a5a5a"/><rect x="94" y="2" width="1" height="1" fill="#5a5a5a"/><rect x="98" y="2" width="1" height="1" fill="#5a5a5a"/><rect x="102" y="2" width="1" height="1" fill="#5a5a5a"/><rect x="106" y="2" width="1" height="1" fill="#5a5a5a"/><rect x="110" y="2" width="1" height="1" fill="#5a5a5a"/><rect x="114" y="2" width="1" height="1" fill="#5a5a5a"/><rect x="118" y="2" width="1" height="1" fill="#5a5a5a"/><rect x="122" y="2" width="1" height="1" fill="#5a5a5a"/><rect x="126" y="2" width="1" height="1" fill="#5a5a5a"/><rect x="130" y="2" width="1" height="1" fill="#5a5a5a"/><rect x="134" y="2" width="1" height="1" fill="#5a5a5a"/><rect x="138" y="2" width="1" height="1" fill="#5a5a5a"/><rect x="142" y="2" width="1" height="1" fill="#5a5a5a"/><rect x="146" y="2" width="1" height="1" fill="#5a5a5a"/><rect x="150" y="2" width="1" height="1" fill="#5a5a5a"/><rect x="154" y="2" width="1" height="1" fill="#5a5a5a"/><rect x="158" y="2" width="1" height="1" fill="#5a5a5a"/><rect x="162" y="2" width="1" height="1" fill="#5a5a5a"/><rect x="166" y="2" width="1" height="1" fill="#5a5a5a"/><rect x="170" y="2" width="1" height="1" fill="#5a5a5a"/><rect x="174" y="2" width="1" height="1" fill="#5a5a5a"/><rect x="178" y="2" width="1" height="1" fill="#5a5a5a"/><rect x="182" y="2" width="1" height="1" fill="#5a5a5a"/><rect x="186" y="2" width="1" height="1" fill="#5a5a5a"/><rect x="0" y="4" width="1" height="1" fill="#5a5a5a"/><rect x="4" y="4" width="1" height="1" fill="#5a5a5a"/><rect x="8" y="4" width="1" height="1" fill="#5a5a5a"/><rect x="12" y="4" width="1" height="1" fill="#5a5a5a"/><rect x="16" y="4" width="1" height="1" fill="#5a5a5a"/><rect x="20" y="4" width="1" height="1" fill="#5a5a5a"/><rect x="24" y="4" width="1" height="1" fill="#5a5a5a"/><rect x="28" y="4" width="1" height="1" fill="#5a5a5a"/><rect x="32" y="4" width="1" height="1" fill="#5a5a5a"/><rect x="36" y="4" width="1" height="1" fill="#5a5a5a"/><rect x="40" y="4" width="1" height="1" fill="#5a5a5a"/><rect x="44" y="4" width="1" height="1" fill="#5a5a5a"/><rect x="48" y="4" width="1" height="1" fill="#5a5a5a"/><rect x="52" y="4" width="1" height="1" fill="#5a5a5a"/><rect x="56" y="4" width="1" height="1" fill="#5a5a5a"/><rect x="60" y="4" width="1" height="1" fill="#5a5a5a"/><rect x="64" y="4" width="1" height="1" fill="#5a5a5a"/><rect x="68" y="4" width="1" height="1" fill="#5a5a5a"/><rect x="72" y="4" width="1" height="1" fill="#5a5a5a"/><rect x="76" y="4" width="1" height="1" fill="#5a5a5a"/><rect x="80" y="4" width="1" height="1" fill="#5a5a5a"/><rect x="84" y="4" width="1" height="1" fill="#5a5a5a"/><rect x="88" y="4" width="1" height="1" fill="#5a5a5a"/><rect x="92" y="4" width="1" height="1" fill="#5a5a5a"/><rect x="96" y="4" width="1" height="1" fill="#5a5a5a"/><rect x="100" y="4" width="1" height="1" fill="#5a5a5a"/><rect x="104" y="4" width="1" height="1" fill="#5a5a5a"/><rect x="108" y="4" width="1" height="1" fill="#5a5a5a"/><rect x="112" y="4" width="1" height="1" fill="#5a5a5a"/><rect x="116" y="4" width="1" height="1" fill="#5a5a5a"/><rect x="120" y="4" width="1" height="1" fill="#5a5a5a"/><rect x="124" y="4" width="1" height="1" fill="#5a5a5a"/><rect x="128" y="4" width="1" height="1" fill="#5a5a5a"/><rect x="132" y="4" width="1" height="1" fill="#5a5a5a"/><rect x="136" y="4" width="1" height="1" fill="#5a5a5a"/><rect x="140" y="4" width="1" height="1" fill="#5a5a5a"/><rect x="144" y="4" width="1" height="1" fill="#5a5a5a"/><rect x="148" y="4" width="1" height="1" fill="#5a5a5a"/><rect x="152" y="4" width="1" height="1" fill="#5a5a5a"/><rect x="156" y="4" width="1" height="1" fill="#5a5a5a"/><rect x="160" y="4" width="1" height="1" fill="#5a5a5a"/><rect x="164" y="4" width="1" height="1" fill="#5a5a5a"/><rect x="168" y="4" width="1" height="1" fill="#5a5a5a"/><rect x="172" y="4" width="1" height="1" fill="#5a5a5a"/><rect x="176" y="4" width="1" height="1" fill="#5a5a5a"/><rect x="180" y="4" width="1" height="1" fill="#5a5a5a"/><rect x="184" y="4" width="1" height="1" fill="#5a5a5a"/><rect x="188" y="4" width="1" height="1" fill="#5a5a5a"/></svg><svg class="b" style="left:1865px;top:81px;" width="8" height="4" viewBox="0 0 8 4"><path d="M0 0H8L4.0 4Z" fill="#e6e6e6"/></svg><svg class="b" style="left:1882px;top:77px;" width="8" height="13" viewBox="0 0 8 13"><path d="M1.5 7V1.5H5.5M0 7.5H7M3.5 8V12" fill="none" stroke="#e6e6e6" stroke-width="1"/><path d="M5.5 1V7" stroke="#e6e6e6" stroke-width="2"/></svg><svg class="b" style="left:1897px;top:78px;" width="11" height="10" viewBox="0 0 11 10"><path d="M1 1.3L9.7 8.6M9.7 1.3L1 8.6" stroke="#e6e6e6" stroke-width="1.6"/></svg><svg class="b" style="left:1573px;top:100px;" width="17" height="16" viewBox="0 0 17 16"><path d="M7.6 6.5V1.6H15.4V11.6H11" fill="none" stroke="#e6e6e6" stroke-width="1"/><path d="M7.6 1.8H15.4" stroke="#e6e6e6" stroke-width="1.8"/><path d="M9.2 4.5H10.2M11.2 4.5H14M9.2 6.5H10.2M11.2 6.5H14M11.2 8.5H14" stroke="#e6e6e6" stroke-width="1"/><g transform="translate(0.3 6.6) scale(0.96)"><path d="M7.2 0.3L9.7 1.5V8.5L7.2 9.7L3.2 6L1.3 7.5L0.3 7V3L1.3 2.5L3.2 4Z M7 3L4.5 5L7 7Z M1.4 3.9V6.1L2.5 5Z" fill="#ae7be6" fill-rule="evenodd"/></g></svg><div class="b" style="left:1596px;top:98px;width:1px;height:20px;background:#444;"></div><svg class="b" style="left:1603px;top:98px;" width="18" height="19" viewBox="1603 98 18 19"><path d="M1604.8 100H1610L1608.2 102.3V105.2H1606.7V102.3Z" fill="#4da6ff"/><circle cx="1613.5" cy="109.3" r="5.3" fill="#2a2a2a" stroke="#e6e6e6" stroke-width="1.1"/><path d="M1613.5 106V109.8H1616.2" fill="none" stroke="#e6e6e6" stroke-width="1.1"/></svg><svg class="b" style="left:1626.8px;top:106.8px;" width="6.4" height="3.5" viewBox="0 0 6.4 3.5"><path d="M0 0H6.4L3.2 3.5Z" fill="#d6d6d6"/></svg><svg class="b" style="left:1639px;top:101px;" width="17" height="14" viewBox="1639 101 17 14"><path d="M1651.8 106.2H1640.9L1644 103.1M1642 109.7H1653.2L1650.1 112.8" fill="none" stroke="#e6e6e6" stroke-width="1.1"/></svg><svg class="b" style="left:1661px;top:99px;" width="17" height="17" viewBox="0 0 17 17"><path d="M3.5 3.5V1.5H15.5V13.5H13.5" fill="none" stroke="#e0e0e0" stroke-width="1"/><rect x="1.5" y="3.5" width="12" height="12" fill="#1f1f1f" stroke="#e0e0e0" stroke-width="1"/><path d="M4.5 9.5H10.5" stroke="#e0e0e0" stroke-width="1.2"/></svg><svg class="b" style="left:1682px;top:99px;" width="18" height="18" viewBox="1682 99 18 18"><rect x="1690.9" y="101.6" width="6.7" height="8.7" fill="#2c2c2c" stroke="#c4c4c4" stroke-width="1"/><rect x="1684.6" y="104" width="6.4" height="8.8" fill="#2c2c2c" stroke="#c4c4c4" stroke-width="1"/><rect x="1688" y="105.7" width="6.3" height="8.5" fill="#3a3a3a" stroke="#f0f0f0" stroke-width="1.2"/><path d="M1690.8 107V110H1693" fill="none" stroke="#8a8a8a" stroke-width="0.9"/></svg><div class="b" style="left:1705px;top:98px;width:1px;height:20px;background:#444;"></div><div class="b" style="left:1711px;top:97px;width:22px;height:22px;background:#2e2e2e;border:1px solid #7160e8;"></div><svg class="b" style="left:1713px;top:99px;" width="18" height="18" viewBox="1713 99 18 18"><path d="M1716.5 104.3V107.1H1719.3M1721 108.7V112.4H1724.4" fill="none" stroke="#c8c8c8" stroke-width="1"/><rect x="1715.3" y="101.5" width="2.4" height="2.4" fill="none" stroke="#f0f0f0" stroke-width="1"/><rect x="1719.8" y="105.9" width="2.6" height="2.6" fill="none" stroke="#f0f0f0" stroke-width="1"/><rect x="1724.9" y="110.7" width="3.4" height="3.4" fill="#3a3a3a" stroke="#f0f0f0" stroke-width="1.1"/></svg><svg class="b" style="left:1736px;top:106.8px;" width="6.4" height="3.5" viewBox="0 0 6.4 3.5"><path d="M0 0H6.4L3.2 3.5Z" fill="#d6d6d6"/></svg><div class="b" style="left:1748px;top:98px;width:1px;height:20px;background:#444;"></div><svg class="b" style="left:1755px;top:99px;" width="18" height="18" viewBox="1755 99 18 18"><path d="M1758 113.6L1764.6 107.2" stroke="#e6e6e6" stroke-width="2.7" stroke-linecap="round"/><path d="M1758.2 113.4L1764.2 107.6" stroke="#555" stroke-width="0.8"/><circle cx="1766.8" cy="105" r="3.8" fill="#e6e6e6"/><path d="M1766.6 104.8L1768.2 100.2L1772 103.6Z" fill="#1f1f1f"/><circle cx="1768.3" cy="103.4" r="1.7" fill="#1f1f1f"/></svg><div class="b" style="left:1775px;top:96px;width:22px;height:24px;background:#2e2e2e;border:1px solid #7160e8;"></div><svg class="b" style="left:1778px;top:100px;" width="18" height="16" viewBox="0 0 18 16"><path d="M0.3 10.4H2.6V7.6H11.4V10.4H2.6" fill="none" stroke="#eaeaea" stroke-width="1"/><path d="M10.3 2.8V5M13 5.8L14.4 4.4M14 8.3H16" stroke="#f5d67b" stroke-width="1.1"/></svg><div class="b" style="left:1567px;top:122px;width:346px;height:21px;background:#383838;border:1px solid #424242;border-left:none;border-right:none;"></div><span class="t s" id="t64" style="left:1572px;top:125.04px;font-size:12px;line-height:16px;color:#d8d8d8;letter-spacing:-0.128px;">Search Solution Explorer (Ctrl+ü)</span><svg class="b" style="left:1883px;top:125px;" width="17" height="16" viewBox="1883 125 17 16"><circle cx="1893.6" cy="131.3" r="3.6" fill="none" stroke="#e6e6e6" stroke-width="1.6"/><path d="M1890.9 134.2L1886.7 138.2" stroke="#e6e6e6" stroke-width="2.4" stroke-linecap="round"/></svg><svg class="b" style="left:1903px;top:131px;" width="6" height="3" viewBox="0 0 6 3"><path d="M0 0H6L3.0 3Z" fill="#d0d0d0"/></svg><svg class="b" style="left:1580px;top:146px;" width="18" height="18" viewBox="1580 146 18 18"><path d="M1585.8 160.2H1582.5V148.8H1595.4V153" fill="none" stroke="#e0e0e0" stroke-width="1"/><path d="M1582.5 149.3H1595.4" stroke="#e0e0e0" stroke-width="1.6"/><path d="M1582.5 151.8H1595.4" stroke="#e0e0e0" stroke-width="0.9"/><path d="M1593.5 153.2L1596 154.4V160.8L1593.5 162L1589.8 158.9L1588.2 160.2L1587 159.7V155.5L1588.2 155L1589.8 156.3Z M1593.6 155.9L1591.2 157.6L1593.6 159.3Z" fill="#ae7be6" fill-rule="evenodd"/></svg><span class="t s" id="t65" style="left:1602px;top:146.64px;font-size:12px;line-height:16px;color:#fafafa;letter-spacing:0.004px;">Solution 'ConsoleApp1' (1 of 1 project)</span><svg class="b" style="left:1576px;top:169px;" width="10" height="10" viewBox="1576 169 10 10"><path d="M1584.3 170.7V177H1577.7Z" fill="#e0e0e0"/></svg><div class="b" style="left:1600px;top:168px;width:14.4px;height:12px;background:#2a2a2a;border:1px solid #c8c8c8;"></div><span class="t s" id="t66" style="left:1602.2px;top:167.55px;font-size:8.8px;line-height:12.8px;color:#8ae28a;font-weight:bold;letter-spacing:-0.525px;">C#</span><span class="t s" id="t67" style="left:1620.2px;top:165.64px;font-size:12px;line-height:16px;color:#ffffff;font-weight:bold;letter-spacing:-0.559px;">ConsoleApp1</span><svg class="b" style="left:1594px;top:186px;" width="10" height="13" viewBox="1594 186 10 13"><path d="M1596.4 188.4L1600.8 192.7L1596.4 197Z" fill="none" stroke="#e6e6e6" stroke-width="1"/></svg><svg class="b" style="left:1616px;top:186px;" width="19" height="13" viewBox="1616 186 19 13"><path d="M1622.7 190H1627.7M1620.7 194H1625.2" stroke="#a0a0a0" stroke-width="1.2"/><rect x="1628.1" y="187.8" width="4.5" height="4.2" fill="none" stroke="#b0b0b0" stroke-width="1"/><rect x="1620" y="188.6" width="2.7" height="2.7" fill="none" stroke="#e6e6e6" stroke-width="1"/><rect x="1617.5" y="192.6" width="3" height="3" fill="none" stroke="#f0f0f0" stroke-width="1.1"/><rect x="1625.6" y="191.8" width="4.8" height="4.8" fill="#3a3a3a" stroke="#f0f0f0" stroke-width="1.1"/></svg><span class="t s" id="t68" style="left:1638.4px;top:184.94px;font-size:12px;line-height:16px;color:#fafafa;letter-spacing:-0.211px;">Dependencies</span><div class="b" style="left:1568px;top:202px;width:345px;height:19px;background:#3d3d3d;border:1px solid #676767;"></div><span class="t s" id="t69" style="left:1618px;top:204.96px;font-size:10.8px;line-height:14.8px;color:#8ae28a;letter-spacing:0.344px;-webkit-text-stroke:0.25px #8ae28a;">C#</span><span class="t s" id="t70" style="left:1638.4px;top:203.94px;font-size:12px;line-height:16px;color:#fafafa;letter-spacing:-0.116px;">Program.cs</span><div class="b" style="left:1566px;top:982px;width:101px;height:21px;background:#1f1f1f;border:1px solid #3d3d3d;border-top:none;"></div><span class="t s" id="t71" style="left:1572px;top:983.84px;font-size:12px;line-height:16px;color:#ffffff;letter-spacing:-0.129px;">Solution Explorer</span><span class="t s" id="t72" style="left:1673px;top:983.84px;font-size:12px;line-height:16px;color:#c0c0c0;letter-spacing:-0.228px;">Git Changes</span><div class="b" style="left:6px;top:715px;width:1554px;height:268px;border:1px solid #3d3d3d;"></div><span class="t s" id="t73" style="left:12px;top:718.84px;font-size:12px;line-height:16px;color:#c0c0c0;letter-spacing:0.028px;">Output</span><svg class="b" style="left:1511px;top:724px;" width="8" height="4" viewBox="0 0 8 4"><path d="M0 0H8L4.0 4Z" fill="#d0d0d0"/></svg><svg class="b" style="left:1528px;top:720px;" width="8" height="13" viewBox="0 0 8 13"><path d="M1.5 7V1.5H5.5M0 7.5H7M3.5 8V12" fill="none" stroke="#d0d0d0" stroke-width="1"/><path d="M5.5 1V7" stroke="#d0d0d0" stroke-width="2"/></svg><svg class="b" style="left:1543px;top:721px;" width="11" height="10" viewBox="0 0 11 10"><path d="M1 1.3L9.7 8.6M9.7 1.3L1 8.6" stroke="#d0d0d0" stroke-width="1.6"/></svg><span class="t s" id="t74" style="left:14px;top:742.84px;font-size:12px;line-height:16px;color:#fafafa;letter-spacing:0.165px;">Show output from:</span><div class="b" style="left:120px;top:740px;width:300px;height:20px;background:#383838;border:1px solid #424242;"></div><svg class="b" style="left:409px;top:748px;" width="7" height="4" viewBox="0 0 7 4"><path d="M0 0H7L3.5 4Z" fill="#e0e0e0"/></svg><div class="b" style="left:426px;top:741px;width:1px;height:18px;background:#444;"></div><div class="b" style="left:456px;top:741px;width:1px;height:18px;background:#444;"></div><div class="b" style="left:508px;top:741px;width:1px;height:18px;background:#444;"></div><div class="b" style="left:538px;top:741px;width:1px;height:18px;background:#444;"></div><div class="b" style="left:568px;top:741px;width:1px;height:18px;background:#444;"></div><svg class="b" style="left:433px;top:741px;" width="18" height="18" viewBox="433 741 18 18"><path d="M442 746.8C442 744.3 440.8 743.3 439.6 743.3C438.4 743.3 437.4 744.3 437.4 746V751.2M435.6 749.3L437.4 751.3L439.3 749.3" fill="none" stroke="#4c4c4c" stroke-width="1"/><path d="M440 751.2H449M435 756.4H449" stroke="#4c4c4c" stroke-width="0.8"/><path d="M435 753.8H445" stroke="#4c4c4c" stroke-width="1.8"/></svg><svg class="b" style="left:462px;top:741px;" width="18" height="18" viewBox="462 741 18 18"><path d="M472 746.3H464.5M466.8 744L464.5 746.3L466.8 748.6" fill="none" stroke="#4c4c4c" stroke-width="1"/><path d="M467 751.2H478M467 756.4H478" stroke="#4c4c4c" stroke-width="0.8"/><path d="M467 753.8H478" stroke="#4c4c4c" stroke-width="1.8"/></svg><svg class="b" style="left:484px;top:741px;" width="17" height="18" viewBox="484 741 17 18"><path d="M486 746.3H493.5M491.2 744L493.5 746.3L491.2 748.6" fill="none" stroke="#4c4c4c" stroke-width="1"/><path d="M488 751.2H499M488 756.4H499" stroke="#4c4c4c" stroke-width="0.8"/><path d="M488 753.8H499" stroke="#4c4c4c" stroke-width="1.8"/></svg><svg class="b" style="left:515px;top:741px;" width="18" height="18" viewBox="515 741 18 18"><path d="M517.3 743.6L522 748.3M522 743.6L517.3 748.3" stroke="#4c4c4c" stroke-width="0.9"/><path d="M524.5 743.4H531M524.5 746.4H531M524.5 749.5H531M517 752.6H531M517 755.7H531" stroke="#4c4c4c" stroke-width="0.9"/></svg><span class="t s" id="t75" style="left:546.8px;top:741.83px;font-size:8px;line-height:10px;color:#eaeaea;font-weight:bold;letter-spacing:-0.072px;">ab</span><span class="t s" id="t76" style="left:546.8px;top:747.43px;font-size:8px;line-height:10px;color:#eaeaea;font-weight:bold;letter-spacing:-0.653px;">c</span><svg class="b" style="left:550px;top:745px;" width="14" height="12" viewBox="550 745 14 12"><path d="M556.8 747.4H561V753.3H552.8M555 751L552.6 753.3L555 755.6" fill="none" stroke="#55aaff" stroke-width="1.2"/></svg><svg class="b" style="left:575px;top:741px;" width="18" height="18" viewBox="575 741 18 18"><circle cx="583.8" cy="750" r="6.6" fill="#2a2a2a" stroke="#eaeaea" stroke-width="1.2"/><path d="M583.8 746V750.8H587" fill="none" stroke="#eaeaea" stroke-width="1.2"/></svg><span class="t s" id="t77" style="left:12px;top:983.84px;font-size:12px;line-height:16px;color:#c0c0c0;letter-spacing:-0.249px;">Error List</span><div class="b" style="left:64px;top:982px;width:50px;height:21px;background:#1f1f1f;border:1px solid #3d3d3d;border-top:none;"></div><span class="t s" id="t78" style="left:70px;top:983.84px;font-size:12px;line-height:16px;color:#ffffff;letter-spacing:0.361px;">Output</span><div class="b" style="left:0px;top:1009px;width:1920px;height:23px;background:#424242;"></div><svg class="b" style="left:2px;top:1011px;" width="21" height="20" viewBox="2 1011 21 20"><path d="M4.5 1013.5H19.5V1025.4H14.8L12 1028.5L9.2 1025.4H4.5Z" fill="#525252" stroke="#f2f2f2" stroke-width="1.3" stroke-linejoin="round"/></svg><span class="t s" id="t79" style="left:28px;top:1012.84px;font-size:12px;line-height:16px;color:#fafafa;letter-spacing:-0.497px;">Ready</span><svg class="b" style="left:1572px;top:1013px;" width="12" height="14" viewBox="0 0 12 14"><path d="M6 13.5V1M1 6L6 1L11 6" fill="none" stroke="#f0f0f0" stroke-width="1.1"/></svg><span class="t s" id="t80" style="left:1593px;top:1012.84px;font-size:12px;line-height:16px;color:#fafafa;letter-spacing:0.006px;">Add to Source Control</span><svg class="b" style="left:1718px;top:1019px;" width="7" height="4" viewBox="0 0 7 4"><path d="M0 4H7L3.5 0Z" fill="#f0f0f0"/></svg><svg class="b" style="left:1746px;top:1013px;" width="18" height="17" viewBox="1746 1013 18 17"><path d="M1748.3 1016.2H1762.2" stroke="#f0f0f0" stroke-width="1.7"/><path d="M1750.4 1017V1027.1H1760.1V1017M1753.4 1017.5V1022.8L1755.3 1021.4L1757.2 1022.8V1017.5" fill="none" stroke="#f0f0f0" stroke-width="1.1"/></svg><span class="t s" id="t81" style="left:1769px;top:1012.84px;font-size:12px;line-height:16px;color:#fafafa;letter-spacing:-0.226px;">Select Repository</span><svg class="b" style="left:1866px;top:1019px;" width="7" height="4" viewBox="0 0 7 4"><path d="M0 4H7L3.5 0Z" fill="#f0f0f0"/></svg><svg class="b" style="left:1894px;top:1012px;" width="14" height="16" viewBox="0 0 14 16"><path d="M7 1C4.5 1 3 3 3 5.5V9.5L1.2 11.8V12.5H12.8V11.8L11 9.5V5.5C11 3 9.5 1 7 1Z M5.5 13C5.5 15 8.5 15 8.5 13" fill="none" stroke="#f0f0f0" stroke-width="1.1"/></svg>
</body></html>
